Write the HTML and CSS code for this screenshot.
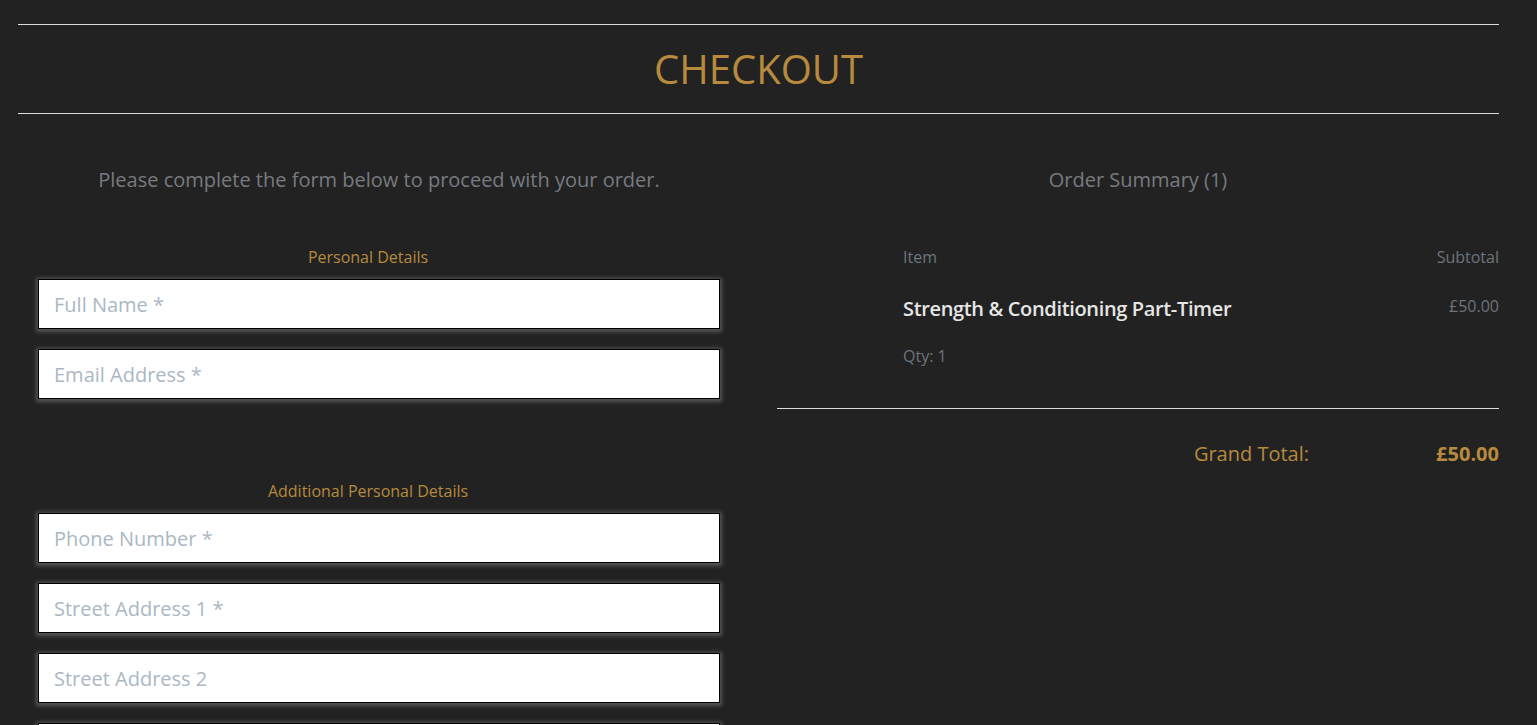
FILE: index.html
```html
<!DOCTYPE html>
<html lang="en">
<head>
<meta charset="utf-8">
<title>Checkout</title>
<link rel="stylesheet" href="styles.css">
</head>
<body>
<div class="page">
  <hr class="rule rule-top">
  <h1 class="title">CHECKOUT</h1>
  <hr class="rule rule-bottom">
  <div class="columns">
    <section class="form-col">
      <p class="lead">Please complete the form below to proceed with your order.</p>
      <div class="group">
        <h2 class="group-title">Personal Details</h2>
        <input class="field" type="text" placeholder="Full Name *">
        <input class="field" type="email" placeholder="Email Address *">
      </div>
      <div class="group group-2">
        <h2 class="group-title">Additional Personal Details</h2>
        <input class="field" type="text" placeholder="Phone Number *">
        <input class="field" type="text" placeholder="Street Address 1 *">
        <input class="field" type="text" placeholder="Street Address 2">
        <input class="field" type="text" placeholder="Town or City *">
      </div>
    </section>
    <section class="summary-col">
      <p class="lead">Order Summary (1)</p>
      <div class="items">
        <div class="head-row">
          <span class="muted">Item</span>
          <span class="muted">Subtotal</span>
        </div>
        <div class="item-row">
          <div class="item-info">
            <p class="item-name">Strength &amp; Conditioning Part-Timer</p>
            <p class="muted qty">Qty: 1</p>
          </div>
          <span class="muted price">£50.00</span>
        </div>
      </div>
      <hr class="rule summary-rule">
      <div class="total-row">
        <span class="total-label">Grand Total:</span>
        <span class="total-amount">£50.00</span>
      </div>
    </section>
  </div>
</div>
</body>
</html>
```

FILE: styles.css
```css
* { box-sizing: border-box; }
html, body { margin: 0; padding: 0; }
body {
  background: #222222;
  font-family: "Open Sans", "Noto Sans", sans-serif;
  color: #6c757d;
  overflow: hidden;
  height: 725px;
}
.page {
  margin-left: 18px;
  width: 1481px;
}
.rule {
  border: 0;
  border-top: 1px solid #dcdcdc;
  margin: 0;
}
.rule-top { margin-top: 24px; }
.title {
  margin: 0;
  height: 88px;
  line-height: 88px;
  text-align: center;
  font-weight: 400;
  font-size: 40px;
  color: #b78a3d;
}
.columns {
  display: grid;
  grid-template-columns: 682px 722px;
  column-gap: 57px;
  margin-left: 20px;
}
.lead {
  margin: 52px 0 0;
  text-align: center;
  font-size: 20px;
  line-height: 28px;
  color: #777b80;
}
.group {
  margin: 52px 0 0;
  display: flex;
  flex-direction: column;
  gap: 20px;
}
.group-2 { margin-top: 81px; }
.group-title {
  margin: 0 0 -9px;
  padding-right: 22px;
  text-align: center;
  font-weight: 400;
  font-size: 16px;
  line-height: 22px;
  color: #b78a3d;
}
.field {
  display: block;
  width: 100%;
  height: 50px;
  border: 1px solid #000;
  background: #fff;
  box-shadow: 0 1px 4px 2px rgba(150, 150, 150, 0.45);
  padding: 0 15px;
  font-family: "Open Sans", "Noto Sans", sans-serif;
  font-size: 20px;
  color: #333;
  outline: none;
}
.field::placeholder { color: #aab7c4; }
.summary-col { display: flex; flex-direction: column; }
.items {
  margin-left: 126px;
  margin-top: 52px;
}
.head-row {
  display: flex;
  justify-content: space-between;
  font-size: 16px;
  line-height: 22px;
}
.muted { color: #6c757d; }
.item-row {
  display: flex;
  justify-content: space-between;
  align-items: flex-start;
  margin-top: 27px;
}
.item-name {
  margin: 0;
  font-weight: 600;
  font-size: 20px;
  line-height: 28px;
  color: #e6e6e6;
  letter-spacing: -0.35px;
}
.qty {
  margin: 22px 0 0;
  font-size: 16px;
  line-height: 22px;
}
.price {
  font-size: 16px;
  line-height: 22px;
}
.summary-rule { margin-top: 41px; }
.total-row {
  display: flex;
  justify-content: flex-end;
  margin-top: 31px;
  font-size: 20px;
  line-height: 28px;
  color: #b78a3d;
}
.total-amount {
  width: 190px;
  text-align: right;
  font-weight: 700;
}
```
